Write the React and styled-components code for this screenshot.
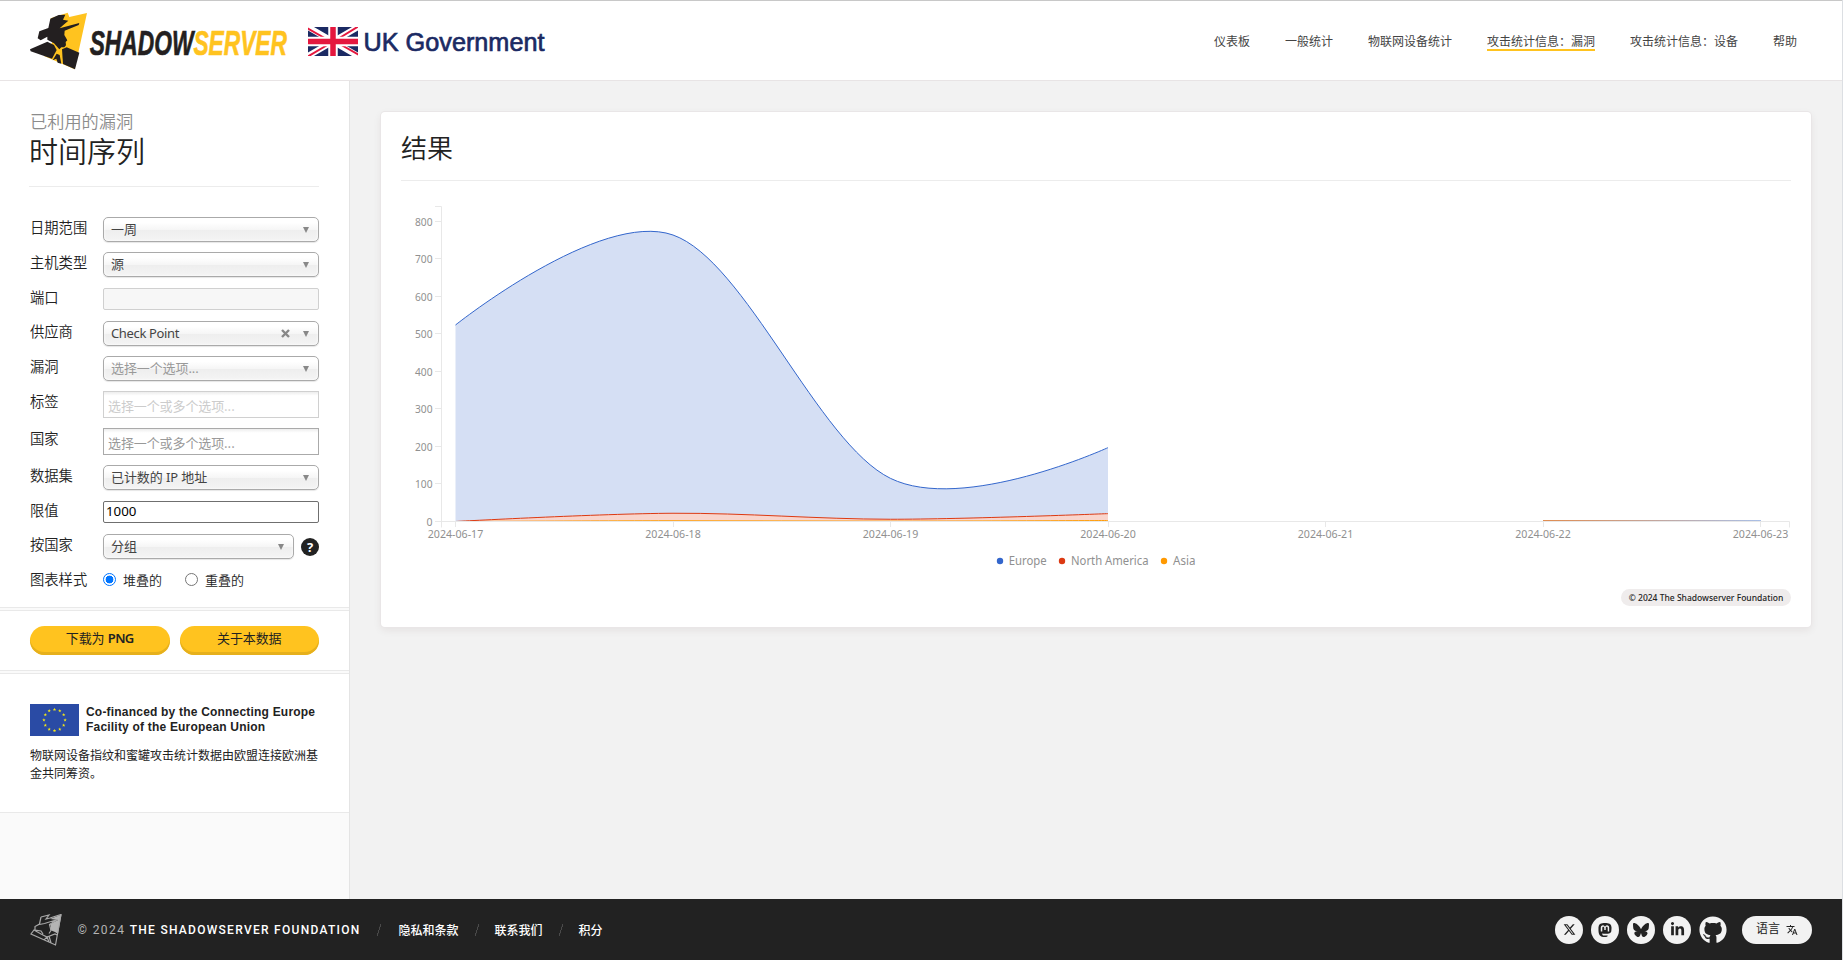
import React from "react";
import styled, { createGlobalStyle, css } from "styled-components";
import { FaXTwitter, FaMastodon, FaBluesky, FaLinkedinIn, FaGithub } from "react-icons/fa6";
import { MdTranslate } from "react-icons/md";

const sans = `"Noto Sans", "Noto Sans CJK SC", sans-serif`;
const cjk = `"Noto Sans CJK SC", "Noto Sans", sans-serif`;

const GlobalStyle = createGlobalStyle`
  *, *::before, *::after { box-sizing: border-box; }
  body { margin: 0; background: #f2f2f2; color: #222; font-family: ${sans}; overflow: hidden; }
  h1, h2, p { margin: 0; font-weight: 400; }
  svg { display: block; flex: none; }
`;

const Page = styled.div`
  display: flex;
  flex-direction: column;
  height: 960px;
  border-right: 1px solid #dcdfe3;
`;

/* ---------- header ---------- */

const Header = styled.header`
  display: flex;
  align-items: center;
  justify-content: space-between;
  height: 81px;
  flex: none;
  padding: 0 45px 0 24px;
  background: #fff;
  border-top: 1px solid #c8c8c8;
  border-bottom: 1px solid #e8e4e5;
`;

const Brand = styled.div`
  display: flex;
  align-items: center;
  gap: 14px;
`;

const Nav = styled.nav`
  display: flex;
  gap: 35px;
  padding-top: 2px;
`;

const NavLink = styled.a`
  height: 19px;
  font: 400 12px/17px ${cjk};
  color: #444;
  white-space: nowrap;
  border-bottom: 2px solid ${(p) => (p.$active ? "#ffc31f" : "transparent")};
`;

const Logo = styled.svg`
  overflow: visible;
`;

function ShadowserverLogo() {
  return (
    <Logo width="270" height="70" viewBox="0 0 810 210">
      <path d="M80 37L131 20L136 33L189 21L152 190L60 150L84 110Z" fill="#ffc31f" />
      <path
        d="M79 38L104 27L124 26L117 41L133 44L118 57L107 67L166 51L164 57L122 74L121 87L130 103L125 108L126 118L121 124L112 124L106 130L90 112L70 101L70 92L50 103L41 97L46 76L73 66Z"
        fill="#231f20"
      />
      <path d="M18 130L70 107L90 117L98 132L84 158L20 136Z" fill="#231f20" />
      <path d="M98 143L107 147L112 173L101 170L97 158L86 163Z" fill="#231f20" />
      <path d="M114 130L128 124L166 140L153 190L117 174Z" fill="#231f20" />
      <text
        x="197"
        y="146"
        textLength="592"
        lengthAdjust="spacingAndGlyphs"
        fontFamily="Liberation Sans Narrow, Liberation Sans"
        fontWeight="700"
        fontStyle="italic"
        fontSize="106"
        strokeWidth="2"
      >
        <tspan fill="#231f20" stroke="#231f20">SHADOW</tspan>
        <tspan fill="#ffc31f" stroke="#ffc31f">SERVER</tspan>
      </text>
    </Logo>
  );
}

function UkGovernmentLogo() {
  return (
    <Logo width="240" height="40" viewBox="0 0 240 40">
      <defs>
        <clipPath id="uk-flag"><rect y="6" width="50" height="29" /></clipPath>
      </defs>
      <g clipPath="url(#uk-flag)">
        <rect y="6" width="50" height="29" fill="#1b2a63" />
        <path d="M0 6l50 29M50 6L0 35" stroke="#fff" strokeWidth="6" />
        <path d="M-1 7l22 12.500M51 34L29 21.500M51 5L29 18.500M-1 36l22-13" stroke="#e4173e" strokeWidth="2" />
        <path d="M25 6v29M0 20.500h50" stroke="#fff" strokeWidth="9.500" />
        <path d="M25 6v29M0 20.500h50" stroke="#e4173e" strokeWidth="5.500" />
      </g>
      <text x="55.500" y="29.500" textLength="181" lengthAdjust="spacingAndGlyphs" fontFamily="Liberation Sans" fontSize="26" fill="#1b2a63" stroke="#1b2a63" strokeWidth=".7">
        UK Government
      </text>
    </Logo>
  );
}

/* ---------- sidebar ---------- */

const Body = styled.div`
  display: flex;
  flex: 1;
  min-height: 0;
`;

const Sidebar = styled.aside`
  width: 350px;
  flex: none;
  background: #fafafa;
  border-right: 1px solid #e4e4e4;
`;

const Section = styled.section`
  height: ${(p) => p.$h}px;
  padding: ${(p) => p.$top}px 30px 0;
  margin-bottom: 2px;
  background: #fff;
  border-bottom: 1px solid #e9e9e9;
  ${(p) => !p.$first && css`border-top: 1px solid #e9e9e9;`}
`;

const Kicker = styled.p`
  font: 350 17.2px/24px ${cjk};
  color: #8c8c8c;
`;

const Title = styled.h1`
  height: 54px;
  margin: 0 0 30px -1px;
  font: 350 29px/34px ${cjk};
  border-bottom: 1px solid #ececec;
`;

const Row = styled.div`
  display: flex;
  height: ${(p) => p.$h || 35}px;
`;

const Label = styled.label`
  width: 73px;
  flex: none;
  font: 350 14.3px/20px ${cjk};
`;

const SelectBox = styled.div`
  display: flex;
  align-items: center;
  flex: 1;
  height: 25px;
  padding: 0 9px 0 7px;
  border: 1px solid #aaa;
  border-radius: 5px;
  background: linear-gradient(#fff 20%, #f6f6f6 50%, #eee 52%, #f4f4f4 100%);
  box-shadow: 0 0 3px #fff inset, 0 1px 1px rgba(0, 0, 0, 0.1);
  font: 400 13px/23px ${sans};
  letter-spacing: ${(p) => (p.$latin ? "-0.35px" : "-0.1px")};
  color: ${(p) => (p.$muted ? "#999" : "#444")};
`;

const SelectText = styled.span`
  flex: 1;
  padding-bottom: 1px;
  white-space: nowrap;
`;

const Arrow = styled.i`
  border: solid transparent;
  border-width: 6px 3.5px 0;
  border-top-color: #888;
`;

const ClearIcon = styled.svg`
  width: 9px;
  height: 9px;
  margin-right: 13px;
  stroke: #888;
  stroke-width: 2.4;
`;

const MultiBox = styled.div`
  flex: 1;
  height: 27px;
  padding: 2px 4px 0;
  border: 1px solid ${(p) => (p.$disabled ? "#d0d0d0" : "#aaa")};
  background: linear-gradient(#eee 1%, #fff 15%);
  font: 400 13px/23px ${cjk};
  letter-spacing: -0.1px;
  color: ${(p) => (p.$disabled ? "#ccc" : "#999")};
`;

const TextBox = styled.div`
  flex: 1;
  height: 22px;
  margin-top: 1px;
  padding-left: 2px;
  border: 1px solid ${(p) => (p.$disabled ? "#d0d0d0" : "#6f6f6f")};
  border-radius: 2px;
  background: ${(p) => (p.$disabled ? "#f7f7f7" : "#fff")};
  font: 400 13.3px/19px ${sans};
  color: #000;
`;

const Help = styled.span`
  width: 18px;
  height: 18px;
  margin: 4px 0 0 7px;
  border-radius: 50%;
  background: #222;
  color: #fff;
  font: 700 13px/18px ${sans};
  text-align: center;
`;

const Radio = styled.span`
  width: 13px;
  height: 13px;
  margin: 4px 7px 0 0;
  border-radius: 50%;
  border: 1px solid ${(p) => (p.$on ? "#0075ff" : "#767676")};
  background: ${(p) => (p.$on ? "radial-gradient(circle, #0075ff 3.6px, #fff 4.2px)" : "#fff")};
`;

const RadioText = styled.span`
  width: 62px;
  font: 350 13px/21px ${cjk};
`;

const Buttons = styled.div`
  display: flex;
  gap: 10px;
`;

const Button = styled.button`
  flex: 1;
  height: 29px;
  padding: 0 0 4px;
  border: 0;
  border-radius: 15px;
  background: #ffc31f;
  box-shadow: inset 0 -3px 0 #e6b01c;
  font: 400 13px/23px ${sans};
  letter-spacing: -0.1px;
  color: #222;
  b { font-weight: 600; letter-spacing: -0.6px; }
`;

const Funding = styled.div`
  display: flex;
  gap: 7px;
  height: 42px;
  font: 700 12px/15px "Liberation Sans", sans-serif;
  letter-spacing: 0.2px;
  white-space: nowrap;
`;

const FundingText = styled.div`
  padding-top: 1px;
`;

const FundingNote = styled.p`
  width: 290px;
  font: 400 12px/18px ${cjk};
`;

function EuFlag() {
  const stars = Array.from({ length: 12 }, (_, i) => (i * Math.PI) / 6);
  return (
    <svg width="49" height="32" viewBox="0 0 49 32">
      <rect width="49" height="32" fill="#2a4ba5" />
      {stars.map((a) => (
        <path
          key={a}
          transform={`translate(${24.5 + 10.6 * Math.sin(a)} ${16 - 10.6 * Math.cos(a)})`}
          d="M0-1.700.5-.5 1.700-.5.7.3 1.100 1.500 0 .8-1.100 1.500-.7.3-1.700-.5-.5-.5z"
          fill="#f3e619"
        />
      ))}
    </svg>
  );
}

function Select({ children, muted, latin, clearable }) {
  return (
    <SelectBox $muted={muted} $latin={latin}>
      <SelectText>{children}</SelectText>
      {clearable && (
        <ClearIcon viewBox="0 0 9 9"><path d="M1 1l7 7M8 1L1 8" /></ClearIcon>
      )}
      <Arrow />
    </SelectBox>
  );
}

/* ---------- results ---------- */

const Main = styled.main`
  flex: 1;
  padding: 31px 31px 0;
`;

const Card = styled.section`
  height: 515px;
  padding: 16px 20px 0;
  background: #fff;
  border-radius: 4px;
  box-shadow: 0 0 0 1px #e9e6e7, 0 3px 8px rgba(60, 30, 30, 0.08);
`;

const CardTitle = styled.h2`
  height: 53px;
  font: 350 26px/38px ${cjk};
  border-bottom: 1px solid #ececec;
`;

const Chart = styled.svg`
  margin: 19px 0 0 -1px;
  overflow: visible;
  font-family: "Noto Sans", sans-serif;
`;

const Credit = styled.div`
  width: 170px;
  height: 17px;
  margin: 5px 0 0 auto;
  border-radius: 9px;
  background: #efecec;
  font: 500 8.5px/17px ${sans};
  text-align: center;
  white-space: nowrap;
`;

const DAYS = ["2024-06-17", "2024-06-18", "2024-06-19", "2024-06-20", "2024-06-21", "2024-06-22", "2024-06-23"];
const BASE = 321.5;
const dayX = (i) => 55.5 + i * 217.5;
const valueY = (v) => BASE - v * 0.375;

// Cardinal spline through the points, as the body of a path after its first point.
function spline(pts) {
  return pts.slice(0, -1).map((p, i) => {
    const n = pts[i + 1];
    const before = pts[i - 1] || n;
    const after = pts[i + 2] || p;
    const c1 = [p[0] + (n[0] - before[0]) / 6, p[1] + (n[1] - before[1]) / 6];
    const c2 = [n[0] - (after[0] - p[0]) / 6, n[1] - (after[1] - p[1]) / 6];
    return `C${c1} ${c2} ${n}`;
  }).join("");
}

const toPoints = (values) => values.map((v, i) => [dayX(i), valueY(v)]);
const linePath = (values) => {
  const pts = toPoints(values);
  return `M${pts[0]}${spline(pts)}`;
};
const bandPath = (top, bottom) => {
  const low = toPoints(bottom).reverse();
  return `${linePath(top)}L${low[0]}${spline(low)}Z`;
};

const STACK = [
  { name: "Europe", color: "#3366cc", fill: "#d5dff4", top: [524, 764, 115, 197], dot: 600, text: 608.7, width: 38 },
  { name: "North America", color: "#dc3912", fill: "#f9d5cc", top: [0, 22, 6, 21], dot: 662, text: 671, width: 77.5 },
  { name: "Asia", color: "#ff9900", fill: "#ffdba8", top: [0, 2, 1, 2.5], dot: 764, text: 773, width: 22.5 },
];

function AreaChart() {
  return (
    <Chart width="1390" height="384" viewBox="0 0 1390 384">
      <defs>
        <linearGradient id="tail" x1="1143" x2="1360" gradientUnits="userSpaceOnUse">
          <stop offset="0" stopColor="#e08c50" />
          <stop offset="1" stopColor="#a9bfe6" />
        </linearGradient>
      </defs>
      {STACK.map((s, i) => (
        <path key={s.name} d={bandPath(s.top, STACK[i + 1] ? STACK[i + 1].top : [0, 0, 0, 0])} fill={s.fill} />
      ))}
      {[...STACK].reverse().map((s) => (
        <path key={s.name} d={linePath(s.top)} fill="none" stroke={s.color} />
      ))}
      <path d="M35 6.500h6.500v321M41.500 321.500H1389.500v6" stroke="#e8e8e8" fill="none" />
      <path d="M1143 320.500H1361" stroke="url(#tail)" />
      <g fill="#909090" fontSize="11">
        {[0, 100, 200, 300, 400, 500, 600, 700, 800].map((v) => (
          <g key={v}>
            <path d={`M35 ${Math.round(valueY(v)) - 0.5}h6`} stroke="#e8e8e8" />
            <text x="32.500" y={valueY(v) + 4} textAnchor="end" textLength={v ? 17.5 : 6} lengthAdjust="spacingAndGlyphs">{v}</text>
          </g>
        ))}
        {DAYS.map((d, i) => (
          <g key={d}>
            <path d={`M${Math.floor(dayX(i)) + 0.5} 321v6`} stroke="#e8e8e8" />
            <text x={dayX(i)} y="338" textAnchor="middle" textLength="55.500" lengthAdjust="spacingAndGlyphs">{d}</text>
          </g>
        ))}
      </g>
      {STACK.map((s) => (
        <g key={s.name}>
          <circle cx={s.dot} cy="361" r="3.200" fill={s.color} />
          <text x={s.text} y="365" fontSize="12.500" fill="#909090" textLength={s.width} lengthAdjust="spacingAndGlyphs">{s.name}</text>
        </g>
      ))}
    </Chart>
  );
}

/* ---------- footer ---------- */

const Footer = styled.footer`
  display: flex;
  align-items: center;
  justify-content: space-between;
  flex: none;
  height: 61px;
  padding: 0 30px;
  background: #222;
  color: #fff;
`;

const FooterLinks = styled.div`
  display: flex;
  align-items: center;
  font: 500 12px/18px ${cjk};
  white-space: nowrap;
`;

const Copyright = styled.span`
  margin-left: 15.5px;
  font: 400 12px/18px Roboto, sans-serif;
  letter-spacing: 1.4px;
  color: #b4b4b4;
  b { font-weight: 500; letter-spacing: 1.28px; color: #fff; }
`;

const Slash = styled.span`
  width: 4px;
  height: 12px;
  margin: 0 ${(p) => p.$after || 16}px 0 16px;
  background: linear-gradient(107deg, transparent 42%, #4a4a4a 44%, #4a4a4a 56%, transparent 58%);
`;

const Social = styled.div`
  display: flex;
  gap: 8px;
`;

const Circle = styled.a`
  display: flex;
  align-items: center;
  justify-content: center;
  width: 28px;
  height: 28px;
  border-radius: 50%;
  background: ${(p) => (p.$bare ? "none" : "#f2f2f2")};
  color: ${(p) => (p.$bare ? "#f2f2f2" : "#222")};
`;

const Language = styled.button`
  display: flex;
  align-items: center;
  gap: 6px;
  height: 28px;
  width: 70px;
  margin-left: 7px;
  padding: 0 0 0 14px;
  border: 0;
  border-radius: 14px;
  background: #f2f2f2;
  font: 400 12px/16px ${cjk};
  color: #222;
  span { padding-bottom: 3px; }
`;

function FooterMark() {
  return (
    <svg width="32" height="32" viewBox="0 0 32 32">
      <path d="M20 5l11.500-4.500L28 20l-3-2-5-2 1-3-1-3 8-4z" fill="#b4b4b4" />
      <path
        d="M11 3l8-2-3 4 4-1 11-3.500L25.500 31 1 20l3-4 7 4 6 3 8-3 2 1M11 3L9.500 10 5 12.500l0 3.500 6 1 2 3M9.500 10.500l5-1 13-4-8 5 1.500 6-2 3M14 26l3-3 2 5M19 22l2 7"
        fill="none"
        stroke="#a8a8a8"
        strokeWidth="1.200"
      />
    </svg>
  );
}

export default function App() {
  return (
    <Page>
      <GlobalStyle />
      <Header>
        <Brand>
          <ShadowserverLogo />
          <UkGovernmentLogo />
        </Brand>
        <Nav>
          <NavLink>仪表板</NavLink>
          <NavLink>一般统计</NavLink>
          <NavLink>物联网设备统计</NavLink>
          <NavLink $active>攻击统计信息：漏洞</NavLink>
          <NavLink>攻击统计信息：设备</NavLink>
          <NavLink>帮助</NavLink>
        </Nav>
      </Header>
      <Body>
        <Sidebar>
          <Section $first $h={527} $top={28}>
            <Kicker>已利用的漏洞</Kicker>
            <Title>时间序列</Title>
            <Row><Label>日期范围</Label><Select>一周</Select></Row>
            <Row><Label>主机类型</Label><Select>源</Select></Row>
            <Row $h={34}><Label>端口</Label><TextBox $disabled /></Row>
            <Row><Label>供应商</Label><Select latin clearable>Check Point</Select></Row>
            <Row><Label>漏洞</Label><Select muted>选择一个选项...</Select></Row>
            <Row $h={37}><Label>标签</Label><MultiBox $disabled>选择一个或多个选项...</MultiBox></Row>
            <Row $h={37}><Label>国家</Label><MultiBox>选择一个或多个选项...</MultiBox></Row>
            <Row><Label>数据集</Label><Select>已计数的 IP 地址</Select></Row>
            <Row $h={34}><Label>限值</Label><TextBox>1000</TextBox></Row>
            <Row><Label>按国家</Label><Select>分组</Select><Help>?</Help></Row>
            <Row>
              <Label>图表样式</Label>
              <Radio $on /><RadioText>堆叠的</RadioText>
              <Radio /><RadioText>重叠的</RadioText>
            </Row>
          </Section>
          <Section $h={61} $top={15}>
            <Buttons>
              <Button>下载为 <b>PNG</b></Button>
              <Button>关于本数据</Button>
            </Buttons>
          </Section>
          <Section $h={140} $top={30}>
            <Funding>
              <EuFlag />
              <FundingText>Co-financed by the Connecting Europe<br />Facility of the European Union</FundingText>
            </Funding>
            <FundingNote>物联网设备指纹和蜜罐攻击统计数据由欧盟连接欧洲基金共同筹资。</FundingNote>
          </Section>
        </Sidebar>
        <Main>
          <Card>
            <CardTitle>结果</CardTitle>
            <AreaChart />
            <Credit>© 2024 The Shadowserver Foundation</Credit>
          </Card>
        </Main>
      </Body>
      <Footer>
        <FooterLinks>
          <FooterMark />
          <Copyright>© 2024 <b>THE SHADOWSERVER FOUNDATION</b></Copyright>
          <Slash $after={18} />
          <span>隐私和条款</span>
          <Slash />
          <span>联系我们</span>
          <Slash />
          <span>积分</span>
        </FooterLinks>
        <Social>
          <Circle><FaXTwitter size={13} /></Circle>
          <Circle><FaMastodon size={16} /></Circle>
          <Circle><FaBluesky size={16} /></Circle>
          <Circle><FaLinkedinIn size={15} /></Circle>
          <Circle $bare><FaGithub size={28} /></Circle>
          <Language><span>语言</span><MdTranslate size={12} /></Language>
        </Social>
      </Footer>
    </Page>
  );
}
